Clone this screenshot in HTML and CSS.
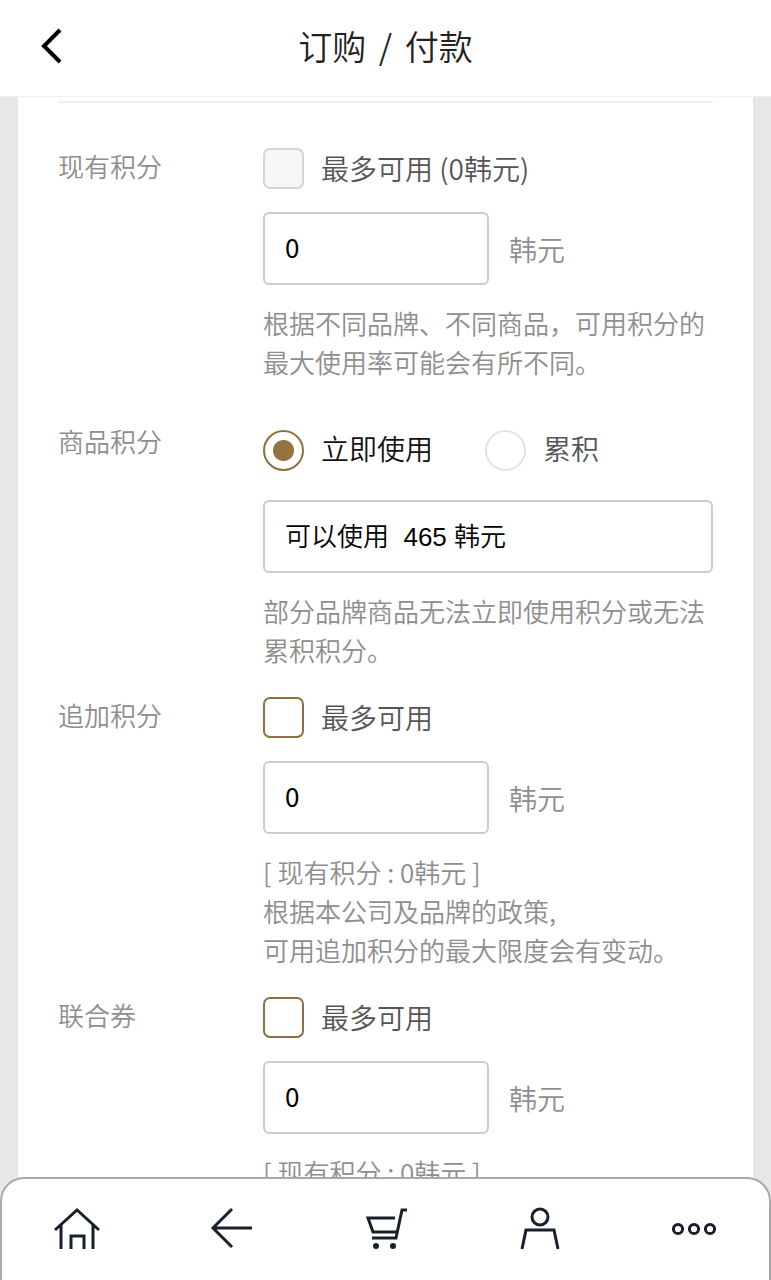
FILE: index.html
```html
<!DOCTYPE html>
<html lang="zh-CN">
<head>
    <meta charset="UTF-8">
    <meta name="viewport" content="width=device-width, initial-scale=1.0">
    <title>订购 / 付款</title>
    <link rel="stylesheet" href="styles.css">
</head>
<body>
    <header class="header">
        <button class="back" type="button" aria-label="返回">
            <svg viewBox="0 0 24 40" width="24" height="40"><path d="M20 4 4 20l16 16"/></svg>
        </button>
        <h1 class="title">订购 <span class="slash">/</span> 付款</h1>
    </header>

    <main class="page">
        <form class="points">
            <div class="row">
                <label class="row-label" for="points">现有积分</label>
                <div class="field">
                    <label class="option"><input class="check" type="checkbox" disabled>最多可用 (0韩元)</label>
                    <div class="amount">
                        <input class="box" id="points" type="text" inputmode="numeric" value="0">
                        <label class="unit" for="points">韩元</label>
                    </div>
                    <p class="hint">根据不同品牌、不同商品，可用积分的最大使用率可能会有所不同。</p>
                </div>
            </div>

            <div class="row row-wide">
                <label class="row-label" for="product-points">商品积分</label>
                <div class="field">
                    <div class="choices">
                        <label class="option option-active"><input class="radio" type="radio" name="mode" checked><span class="choice-text">立即使用</span></label>
                        <label class="option"><input class="radio" type="radio" name="mode"><span class="choice-text">累积</span></label>
                    </div>
                    <input class="box box-full" id="product-points" type="text" value="可以使用  465 韩元" readonly>
                    <p class="hint">部分品牌商品无法立即使用积分或无法累积积分。</p>
                </div>
            </div>

            <div class="row">
                <label class="row-label" for="extra-points">追加积分</label>
                <div class="field">
                    <label class="option"><input class="check" type="checkbox">最多可用</label>
                    <div class="amount">
                        <input class="box" id="extra-points" type="text" inputmode="numeric" value="0">
                        <label class="unit" for="extra-points">韩元</label>
                    </div>
                    <p class="hint">[ 现有积分 : 0韩元 ]<br>根据本公司及品牌的政策,<br>可用追加积分的最大限度会有变动。</p>
                </div>
            </div>

            <div class="row">
                <label class="row-label" for="coupon">联合券</label>
                <div class="field">
                    <label class="option"><input class="check" type="checkbox">最多可用</label>
                    <div class="amount">
                        <input class="box" id="coupon" type="text" inputmode="numeric" value="0">
                        <label class="unit" for="coupon">韩元</label>
                    </div>
                    <p class="hint">[ 现有积分 : 0韩元 ]</p>
                </div>
            </div>
        </form>
    </main>

    <nav class="tabbar">
        <a class="tab" href="#" aria-label="首页">
            <svg class="icon" viewBox="0 0 48 48"><path d="M2 25 24 5l22 20M8 20v24M40 20v24M18 44V31h13v13"/></svg>
        </a>
        <a class="tab" href="#" aria-label="后退">
            <svg class="icon" viewBox="0 0 48 48"><path d="M45 23H6M25 4 6 23l19 19"/></svg>
        </a>
        <a class="tab" href="#" aria-label="购物车">
            <svg class="icon" viewBox="0 0 48 48"><path d="M33 13H6l5 14h24M45 5h-5l-6 28H10"/><circle class="dot" cx="14" cy="41" r="3"/><circle class="dot" cx="31" cy="41" r="3"/></svg>
        </a>
        <a class="tab" href="#" aria-label="我的">
            <svg class="icon" viewBox="0 0 48 48"><circle cx="24" cy="12" r="8"/><path d="M6 44l4-19h28l4 19"/></svg>
        </a>
        <a class="tab" href="#" aria-label="更多">
            <svg class="icon" viewBox="0 0 48 48"><circle cx="8" cy="24" r="4.6"/><circle cx="24" cy="24" r="4.6"/><circle cx="40" cy="24" r="4.6"/></svg>
        </a>
    </nav>
</body>
</html>
```
FILE: styles.css
```css
* {
    box-sizing: border-box;
}

html {
    scrollbar-width: none;
}

body {
    margin: 0;
    background: #e7e7e7;
    color: #555;
    font-family: "Noto Sans CJK SC", sans-serif;
    font-weight: 350;
}

/* Header */
.header {
    position: sticky;
    top: 0;
    z-index: 1;
    display: grid;
    grid-template-columns: 104px 1fr 104px;
    align-items: center;
    height: 97px;
    padding-bottom: 4px;
    background: #fff;
    border-bottom: 1px solid #f1f1f1;
}

.back {
    display: flex;
    justify-content: center;
    padding: 0;
    border: 0;
    background: none;
}

.back svg {
    fill: none;
    stroke: #000;
    stroke-width: 4;
}

.title {
    margin: 0;
    font-size: 34px;
    font-weight: 350;
    line-height: 48px;
    text-align: center;
    color: #222;
}

.slash {
    margin: 0 5px;
}

/* Points form */
.page {
    margin: 0 18px;
    padding: 4px 40px 130px;
    background: #fff;
}

.points {
    display: flex;
    flex-direction: column;
    gap: 26px;
    padding-top: 45px;
    border-top: 2px solid #eee;
}

.row {
    display: grid;
    grid-template-columns: 205px 1fr;
}

.row-wide {
    padding-top: 14px;
}

.row-label {
    font-size: 26px;
    line-height: 36px;
    color: #8e8e8e;
}

.option {
    display: flex;
    align-items: center;
    gap: 17px;
    font-size: 28px;
    line-height: 41px;
}

.option-active {
    color: #111;
}

.choices {
    display: flex;
    gap: 52px;
    height: 55px;
}

.choice-text {
    padding-bottom: 4px;
}

.check,
.radio {
    appearance: none;
    flex: none;
    width: 41px;
    height: 41px;
    margin: 0;
    background: #fff;
    border: 2px solid #8f7141;
    border-radius: 7px;
}

.check:disabled {
    background: #f7f7f7;
    border-color: #d4d4d4;
}

.radio {
    border-color: #e3e3e3;
    border-radius: 50%;
}

.radio:checked {
    border-color: #8f7141;
    background: radial-gradient(circle, #94733f 10px, #fff 11px);
}

.amount {
    display: flex;
    align-items: center;
    gap: 20px;
    margin-top: 23px;
}

.box {
    width: 226px;
    height: 73px;
    padding: 0 20px 4px;
    border: 2px solid #ccc;
    border-radius: 6px;
    background: #fff;
    color: #000;
    font-family: inherit;
    font-size: 26px;
    font-weight: 400;
}

.box-full {
    display: block;
    width: 100%;
    margin-top: 22px;
    font-family: "Liberation Sans", "Noto Sans CJK SC", sans-serif;
    font-weight: 350;
}

.unit {
    font-size: 28px;
    line-height: 42px;
    color: #8e8e8e;
}

.hint {
    margin: 18px 0 2px;
    font-size: 26px;
    line-height: 39px;
    color: #8e8e8e;
}

/* Bottom bar, its lower edge is tucked under the window */
.tabbar {
    position: fixed;
    right: 0;
    bottom: -2px;
    left: 0;
    display: flex;
    height: 105px;
    padding-top: 28px;
    background: #fff;
    border-radius: 24px 24px 0 0;
    box-shadow: inset 0 0 0 2px #a8a8a8;
}

.tab {
    flex: 1;
    display: flex;
    justify-content: center;
}

.icon {
    width: 48px;
    height: 48px;
    fill: none;
    stroke: #17202b;
    stroke-width: 3;
}

.dot {
    fill: #17202b;
    stroke: none;
}
```
